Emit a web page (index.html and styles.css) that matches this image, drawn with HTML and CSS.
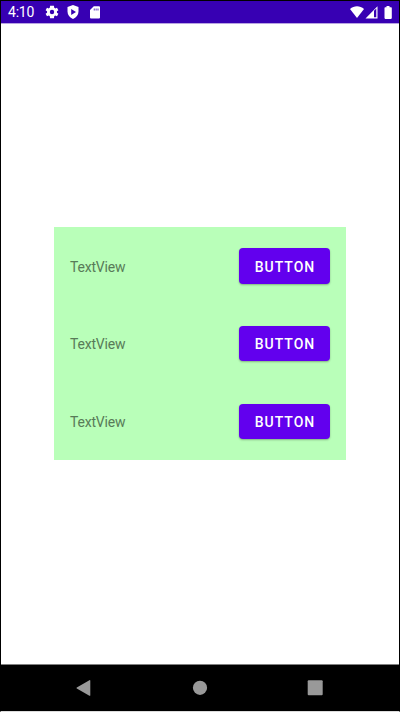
FILE: index.html
```html
<!DOCTYPE html>
<html lang="en">
<head>
<meta charset="utf-8">
<title>Layout</title>
<link rel="stylesheet" href="styles.css">
</head>
<body>
<div class="device">
  <header class="status">
    <span class="clock">4:10</span>
    <svg class="gear" width="14" height="14" viewBox="1.500 1.500 21 21"><path fill-rule="evenodd" d="M19.400 13a7.500 7.500 0 0 0 0-2l2.200-1.700-2.100-3.700-2.600 1a7 7 0 0 0-1.600-1L14.900 2.500H9.100L8.700 5.600a7 7 0 0 0-1.600 1l-2.600-1L2.400 9.300 4.600 11a7.500 7.500 0 0 0 0 2l-2.200 1.700 2.100 3.700 2.600-1a7 7 0 0 0 1.600 1l.4 3.100h5.800l.4-3.100a7 7 0 0 0 1.600-1l2.600 1 2.100-3.700zM12 15.300a3.300 3.300 0 1 1 0-6.600 3.300 3.300 0 0 1 0 6.600z"/></svg>
    <svg class="shield" width="12" height="14" viewBox="0 0 12 14"><path fill-rule="evenodd" d="M6 0L.5 2v4.500C.5 10 2.800 12.600 6 14c3.200-1.400 5.500-4 5.500-7.500V2zM4.200 4v6L9 7z"/></svg>
    <svg class="card" width="10" height="13" viewBox="0 0 10 13"><path fill-rule="evenodd" d="M3.800.3H9a1 1 0 0 1 1 1v10.200a1 1 0 0 1-1 1H1a1 1 0 0 1-1-1V4zM3.800 2.500v2h.8v-2zm1.900 0v2h.8v-2zm1.900 0v2h.8v-2z"/></svg>
    <span class="spacer"></span>
    <svg width="14" height="12" viewBox="0 0 14 12"><path d="M7 12L0 2.900C4-.8 10-.8 14 2.900z"/></svg>
    <svg class="signal" width="13" height="13" viewBox="0 0 13 13"><path fill-rule="evenodd" d="M.5 12.500L12.500 .3v12.200zM9 4.800v6.500h2.300V2.500z"/></svg>
    <svg class="battery" width="8" height="13" viewBox="0 0 8 13"><path d="M2.500 0h3v1.300H7a.8.800 0 0 1 .8.800v10a.8.800 0 0 1-.8.800H1.300a.8.800 0 0 1-.8-.8v-10a.8.800 0 0 1 .8-.8h1.200z"/></svg>
  </header>
  <main class="content">
    <section class="panel">
      <div class="row"><span class="label">TextView</span><button class="btn">BUTTON</button></div>
      <div class="row"><span class="label">TextView</span><button class="btn">BUTTON</button></div>
      <div class="row"><span class="label">TextView</span><button class="btn">BUTTON</button></div>
    </section>
  </main>
  <nav class="nav">
    <svg width="16" height="16" viewBox="0 0 16 16"><path d="M14.300.6v14.800a.6.600 0 0 1-.9.300L.8 8.500a.5.500 0 0 1 0-.9L13.400.2a.6.600 0 0 1 .9.400z"/></svg>
    <svg width="16" height="16" viewBox="0 0 16 16"><circle cx="8" cy="7.800" r="7.100"/></svg>
    <svg width="16" height="16" viewBox="0 0 16 16"><rect x=".7" y=".3" width="15" height="15" rx="1"/></svg>
  </nav>
</div>
</body>
</html>
```
FILE: styles.css
```css
* { box-sizing: border-box; }

body {
  margin: 0;
  background: #fff;
  font-family: Roboto, sans-serif;
}

.device {
  display: flex;
  flex-direction: column;
  height: 712px;
  border: 1px solid #000;
  border-bottom-color: #dcdcdc;
}

.status {
  display: flex;
  align-items: center;
  height: 23px;
  padding: 0 7px;
  background: #3700b3;
  border-bottom: 1px solid #b8a4e2;
  fill: #fff;
}

.clock {
  width: 37px;
  color: #fff;
  font-size: 14px;
  letter-spacing: -.2px;
  line-height: 22px;
}

.shield { margin-left: 8px; }
.card { margin-left: 11px; }
.spacer { flex: 1; }
.signal { margin-left: 1px; }
.battery { margin-left: 6px; }

.content {
  flex: 1;
  padding: 203px 53px 0;
}

.panel {
  height: 233.400px;
  background: #b9ffb9;
}

.row {
  display: flex;
  align-items: center;
  justify-content: space-between;
  height: 77.800px;
  padding: 0 16px;
}

.label {
  padding-top: 1.400px;
  color: #587b58;
  font-size: 14px;
  line-height: 16px;
  letter-spacing: -.19px;
}

.btn {
  width: 91px;
  height: 35.500px;
  padding: 1.400px 0 0 1px;
  border: 0;
  border-radius: 4px;
  background: #6200ee;
  box-shadow: 0 1px 2px rgba(0, 0, 0, .3);
  color: #fff;
  font: 500 14px/16px Roboto, sans-serif;
  letter-spacing: 1px;
}

.nav {
  display: flex;
  align-items: center;
  justify-content: space-between;
  height: 47px;
  padding: 0 76px 0 75px;
  background: #000;
  border-top: 1px solid #808080;
  fill: #999;
}
```
